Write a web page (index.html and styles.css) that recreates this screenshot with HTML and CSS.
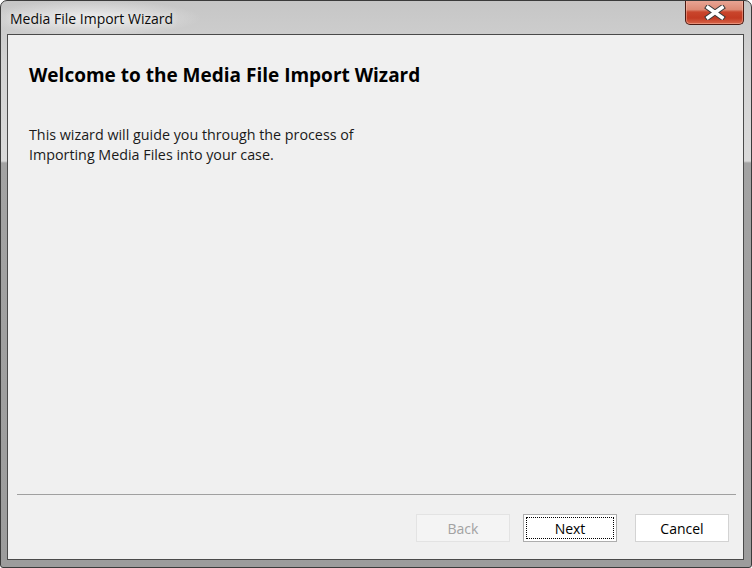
FILE: index.html
```html
<!DOCTYPE html>
<html>
<head>
<meta charset="utf-8">
<link rel="stylesheet" href="styles.css">
</head>
<body>
<div class="window">
  <div class="titlebar">
    <span class="title">Media File Import Wizard</span>
    <button class="close" aria-label="Close">
      <svg width="22" height="15" viewBox="0 0 22 15">
        <path d="M4 2.5 L18 12.5 M18 2.5 L4 12.5" stroke="#3a3a3a" stroke-width="5.5" stroke-linecap="square" fill="none"/>
        <path d="M4 2.5 L18 12.5 M18 2.5 L4 12.5" stroke="#ffffff" stroke-width="3.5" stroke-linecap="square" fill="none"/>
      </svg>
    </button>
  </div>
  <div class="client">
    <div class="content">
      <h1 class="heading">Welcome to the Media File Import Wizard</h1>
      <p class="intro">This wizard will guide you through the process of<br>Importing Media Files into your case.</p>
    </div>
    <div class="footer">
      <div class="sep"></div>
      <div class="buttons">
        <button class="btn disabled">Back</button>
        <button class="btn focused"><span class="focus">Next</span></button>
        <button class="btn cancel">Cancel</button>
      </div>
    </div>
  </div>
</div>
</body>
</html>
```
FILE: styles.css
```css
html, body {
  margin: 0;
  padding: 0;
  background: #ffffff;
}
.window {
  width: 752px;
  height: 568px;
  box-sizing: border-box;
  border: 1px solid #3b3b3b;
  border-radius: 7px 7px 3px 3px;
  background: linear-gradient(to bottom, #c6c6c6 0, #d2d2d2 60px, #dadada 160px, #a3a3a3 162px, #9c9c9c 100%);
  padding: 0 7px 7px 6px;
  display: flex;
  flex-direction: column;
  font-family: "Open Sans", "Noto Sans", sans-serif;
  overflow: hidden;
}
.titlebar {
  height: 33px;
  flex: none;
  display: flex;
  align-items: flex-start;
  margin-left: -6px;
  margin-right: -7px;
  padding: 0 7px 0 9px;
  background: radial-gradient(ellipse 110px 18px at 90px 17px, rgba(240,240,240,0.9), rgba(230,230,230,0) 100%);
}
.title {
  font-size: 14px;
  line-height: 18px;
  margin-top: 9px;
  color: #0a0a0a;
  text-shadow: 0 0 6px #f2f2f2;
}
.close {
  margin-left: auto;
  width: 59px;
  height: 25px;
  margin-top: -1px;
  padding: 0;
  box-sizing: border-box;
  border: 1px solid #4b1a12;
  border-top: none;
  border-radius: 0 0 5px 5px;
  background: linear-gradient(to bottom, #e9a797 0, #dd8a75 40%, #c9452c 50%, #c33a22 75%, #d8664a 100%);
  box-shadow: inset 0 0 0 1px rgba(255,200,180,0.45);
  display: flex;
  align-items: center;
  justify-content: center;
}
.close svg {
  display: block;
  margin-top: 1px;
}
.client {
  flex: 1;
  border: 1px solid #4a4a4a;
  background: #f0f0f0;
  display: flex;
  flex-direction: column;
  min-height: 0;
}
.content {
  flex: 1;
  padding: 28px 0 0 21px;
}
.heading {
  margin: 0;
  font-size: 19px;
  line-height: 25px;
  font-weight: 700;
  color: #000;
}
.intro {
  margin: 37px 0 0 0;
  font-size: 14.3px;
  line-height: 20px;
  color: #1a1a1a;
}
.footer {
  padding: 0 7px 17px 9px;
}
.sep {
  height: 1px;
  background: #a0a0a0;
  margin-bottom: 19px;
}
.buttons {
  display: flex;
  justify-content: flex-end;
  padding-right: 7px;
}
.btn {
  width: 94px;
  height: 28px;
  box-sizing: border-box;
  margin-left: 13px;
  padding: 0;
  font-family: "Open Sans", "Noto Sans", sans-serif;
  font-size: 14px;
  color: #000;
  background: #ffffff;
  border: 1px solid #d3d3d3;
  display: flex;
  align-items: center;
  justify-content: center;
}
.btn.disabled {
  background: #f4f4f4;
  border-color: #e3e3e3;
  color: #a2a2a2;
}
.btn.focused {
  border-color: #adadad;
  padding: 2px;
}
.btn.cancel {
  margin-left: 18px;
}
.focus {
  flex: 1;
  align-self: stretch;
  border: 1px dotted #000;
  display: flex;
  align-items: center;
  justify-content: center;
}
```
